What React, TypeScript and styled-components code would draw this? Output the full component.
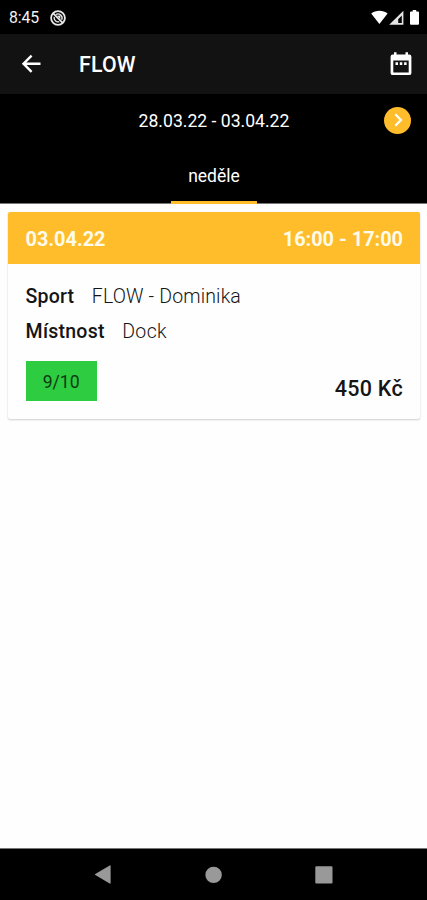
import React from "react";
import styled, { createGlobalStyle } from "styled-components";

const Global = createGlobalStyle`
  * { box-sizing: border-box; }
  body { margin: 0; background: #fff; font-family: Roboto, "Liberation Sans", sans-serif; }
`;

const Screen = styled.div`
  width: 427px;
  height: 900px;
  display: flex;
  flex-direction: column;
  background: #fefefe;
  overflow: hidden;
`;

const Text = styled.span<{ $size: number; $weight?: number; $spacing?: number; $color?: string }>`
  font-size: ${(p) => p.$size}px;
  font-weight: ${(p) => p.$weight ?? 400};
  letter-spacing: ${(p) => p.$spacing ?? 0}px;
  color: ${(p) => p.$color ?? "#fff"};
  line-height: 24px;
  white-space: nowrap;
`;

const StatusBar = styled.div`
  height: 34px;
  flex: none;
  background: #000;
  display: flex;
  align-items: center;
  padding: 2px 7px 0 9px;
`;

const StatusLeft = styled.div`
  display: flex;
  align-items: center;
  gap: 11px;
  flex: 1;
`;

const Icon = styled.svg`
  display: block;
  flex: none;
`;

const AppBar = styled.header`
  height: 60px;
  flex: none;
  background: #121212;
  display: flex;
  align-items: center;
  padding: 0 15px 0 20px;
`;

const Title = styled.h1`
  flex: 1;
  margin: 2px 0 0 36px;
  font-size: 21.3px;
  letter-spacing: 0.2px;
  line-height: 24px;
  font-weight: 500;
  color: #fff;
`;

const WeekRow = styled.div`
  height: 54px;
  flex: none;
  background: #000;
  display: grid;
  grid-template-columns: 1fr auto 1fr;
  align-items: center;
  padding: 0 16px 2px;
`;

const NextButton = styled.button`
  grid-column: 3;
  justify-self: end;
  width: 27px;
  height: 27px;
  padding: 0;
  border: 0;
  border-radius: 50%;
  background: #ffbd2b;
  display: flex;
  align-items: center;
  justify-content: center;
`;

const WeekLabel = styled.div`
  grid-column: 2;
  display: flex;
  padding: 2px 0 0 1px;
`;

const Tabs = styled.nav`
  height: 56px;
  flex: none;
  background: #000;
  display: flex;
  justify-content: center;
  border-bottom: 1px solid #777;
`;

const Tab = styled.div`
  width: 86px;
  height: 56px;
  display: flex;
  justify-content: center;
  padding: 16px 0 0 1px;
  border-bottom: 3px solid #ffbd2b;
`;

const Content = styled.main`
  flex: 1;
  padding: 8px 7px 0 8px;
`;

const Card = styled.article`
  height: 207px;
  background: #fefefe;
  border-radius: 2px;
  box-shadow: 0 1px 2px rgba(0, 0, 0, 0.18), 0 0 1px rgba(0, 0, 0, 0.1);
  overflow: hidden;
`;

const CardHead = styled.div`
  height: 52px;
  background: #ffbd2b;
  display: flex;
  align-items: center;
  justify-content: space-between;
  padding: 4px 17px 0 17.5px;
`;

const CardBody = styled.div`
  padding: 21px 17px 0 17.6px;
`;

const Field = styled.div`
  height: 35px;
  display: flex;
  gap: 17.5px;
`;

const CardFoot = styled.div`
  height: 46px;
  display: flex;
  align-items: flex-end;
  justify-content: space-between;
`;

const Capacity = styled.div`
  width: 71px;
  height: 40px;
  background: #2ecc40;
  display: flex;
  align-items: center;
  justify-content: center;
  padding-top: 2px;
`;

const Price = styled.div`
  height: 24px;
  display: flex;
`;

const NavBar = styled.footer`
  height: 52px;
  flex: none;
  background: #000;
  border-top: 1px solid #777;
  display: flex;
  align-items: center;
  justify-content: space-between;
  padding: 0 94px;
`;

export default function App() {
  return (
    <Screen>
      <Global />
      <StatusBar>
        <StatusLeft>
          <Text $size={15.8} $weight={400} $spacing={-0.1} $color="#f2f2f2">8:45</Text>
          <Icon width="16" height="16" viewBox="0 0 16 16" fill="none" stroke="#e8e8e8">
            <circle cx="8" cy="8" r="6.9" strokeWidth="1.8" />
            <path d="M3.2 3.4 12.7 12.8" strokeWidth="1.8" />
            <path d="M5.9 4.5A4.1 4.1 0 0 1 11.7 9.7M4.2 6.8A4.1 4.1 0 0 0 9.2 11.7" strokeWidth="1.4" />
            <path d="M6.9 5.8 10.4 9V5.6z" fill="#e8e8e8" stroke="none" />
          </Icon>
        </StatusLeft>
        <Icon width="49" height="18" viewBox="0 0 49 18" fill="#fff">
          <path d="M.2 4.6C4.7.9 12.1.9 16.6 4.6L8.4 15.1z" />
          <path d="M32.4 1.8V15.8H18.2zM30.8 6.6 27.2 10.2V14.1H30.8z" fill="#e4e4e4" fillRule="evenodd" />
          <path d="M41.7 1.1h3.5v1.4h1.8a1 1 0 0 1 1 1v11.3a1 1 0 0 1-1 1h-7a1 1 0 0 1-1-1V3.5a1 1 0 0 1 1-1h1.7z" />
        </Icon>
      </StatusBar>
      <AppBar>
        <Icon width="23" height="20" viewBox="0 0 23 20" fill="none" stroke="#fff" strokeWidth="2.4">
          <path d="M20.5 9.7H3.5M11.6 1.6 3.5 9.7l8.1 8.1" />
        </Icon>
        <Title>FLOW</Title>
        <Icon width="22" height="24" viewBox="0 0 22 24" fill="#fff">
          <path fillRule="evenodd" d="M4 .3h2.5v2.2h9V.3H18v2.2h1.2a2.2 2.2 0 0 1 2.2 2.2v16.2a2.2 2.2 0 0 1-2.2 2.2H2.8A2.2 2.2 0 0 1 .6 20.9V4.7a2.2 2.2 0 0 1 2.2-2.2H4zM3.3 8.4v12.1h15.4V8.4z" />
          <path d="M5.5 10.3H8v2.6H5.5zM9.8 10.3h2.5v2.6H9.8zM14.1 10.3h2.5v2.6h-2.5z" />
        </Icon>
      </AppBar>
      <WeekRow>
        <WeekLabel>
          <Text $size={17.6}>28.03.22 - 03.04.22</Text>
        </WeekLabel>
        <NextButton aria-label="Další týden">
          <Icon width="10" height="14" viewBox="0 0 10 14" fill="none" stroke="#fff" strokeWidth="2.2">
            <path d="M2.3 1.2 8 7l-5.7 5.8" />
          </Icon>
        </NextButton>
      </WeekRow>
      <Tabs>
        <Tab>
          <Text $size={17.5}>neděle</Text>
        </Tab>
      </Tabs>
      <Content>
        <Card>
          <CardHead>
            <Text $size={19.9} $weight={700} $color="#fffbea">03.04.22</Text>
            <Text $size={19.9} $weight={700} $color="#fffbea">16:00 - 17:00</Text>
          </CardHead>
          <CardBody>
            <Field>
              <Text $size={19.5} $weight={500} $spacing={0.2} $color="#151515">Sport</Text>
              <Text $size={19.5} $weight={300} $spacing={0.15} $color="#151515">FLOW - Dominika</Text>
            </Field>
            <Field>
              <Text $size={19.5} $weight={500} $spacing={0.25} $color="#151515">Místnost</Text>
              <Text $size={19.5} $weight={300} $spacing={0.35} $color="#151515">Dock</Text>
            </Field>
            <CardFoot>
              <Capacity>
                <Text $size={17.6} $color="#0d3a13">9/10</Text>
              </Capacity>
              <Price>
                <Text $size={21.5} $weight={500} $spacing={0.3} $color="#151515">450 Kč</Text>
              </Price>
            </CardFoot>
          </CardBody>
        </Card>
      </Content>
      <NavBar>
        <Icon width="17" height="19" viewBox="0 0 17 19" fill="#999">
          <path d="M16.6 1v17a.6.6 0 0 1-.9.5L1.3 10a.6.6 0 0 1 0-1L15.7.5a.6.6 0 0 1 .9.5z" />
        </Icon>
        <Icon width="18" height="18" viewBox="0 0 18 18" fill="#999">
          <circle cx="9.6" cy="8.9" r="8.2" />
        </Icon>
        <Icon width="18" height="18" viewBox="0 0 18 18" fill="#999">
          <rect x=".3" y=".3" width="17.2" height="17.2" rx="1.2" />
        </Icon>
      </NavBar>
    </Screen>
  );
}
